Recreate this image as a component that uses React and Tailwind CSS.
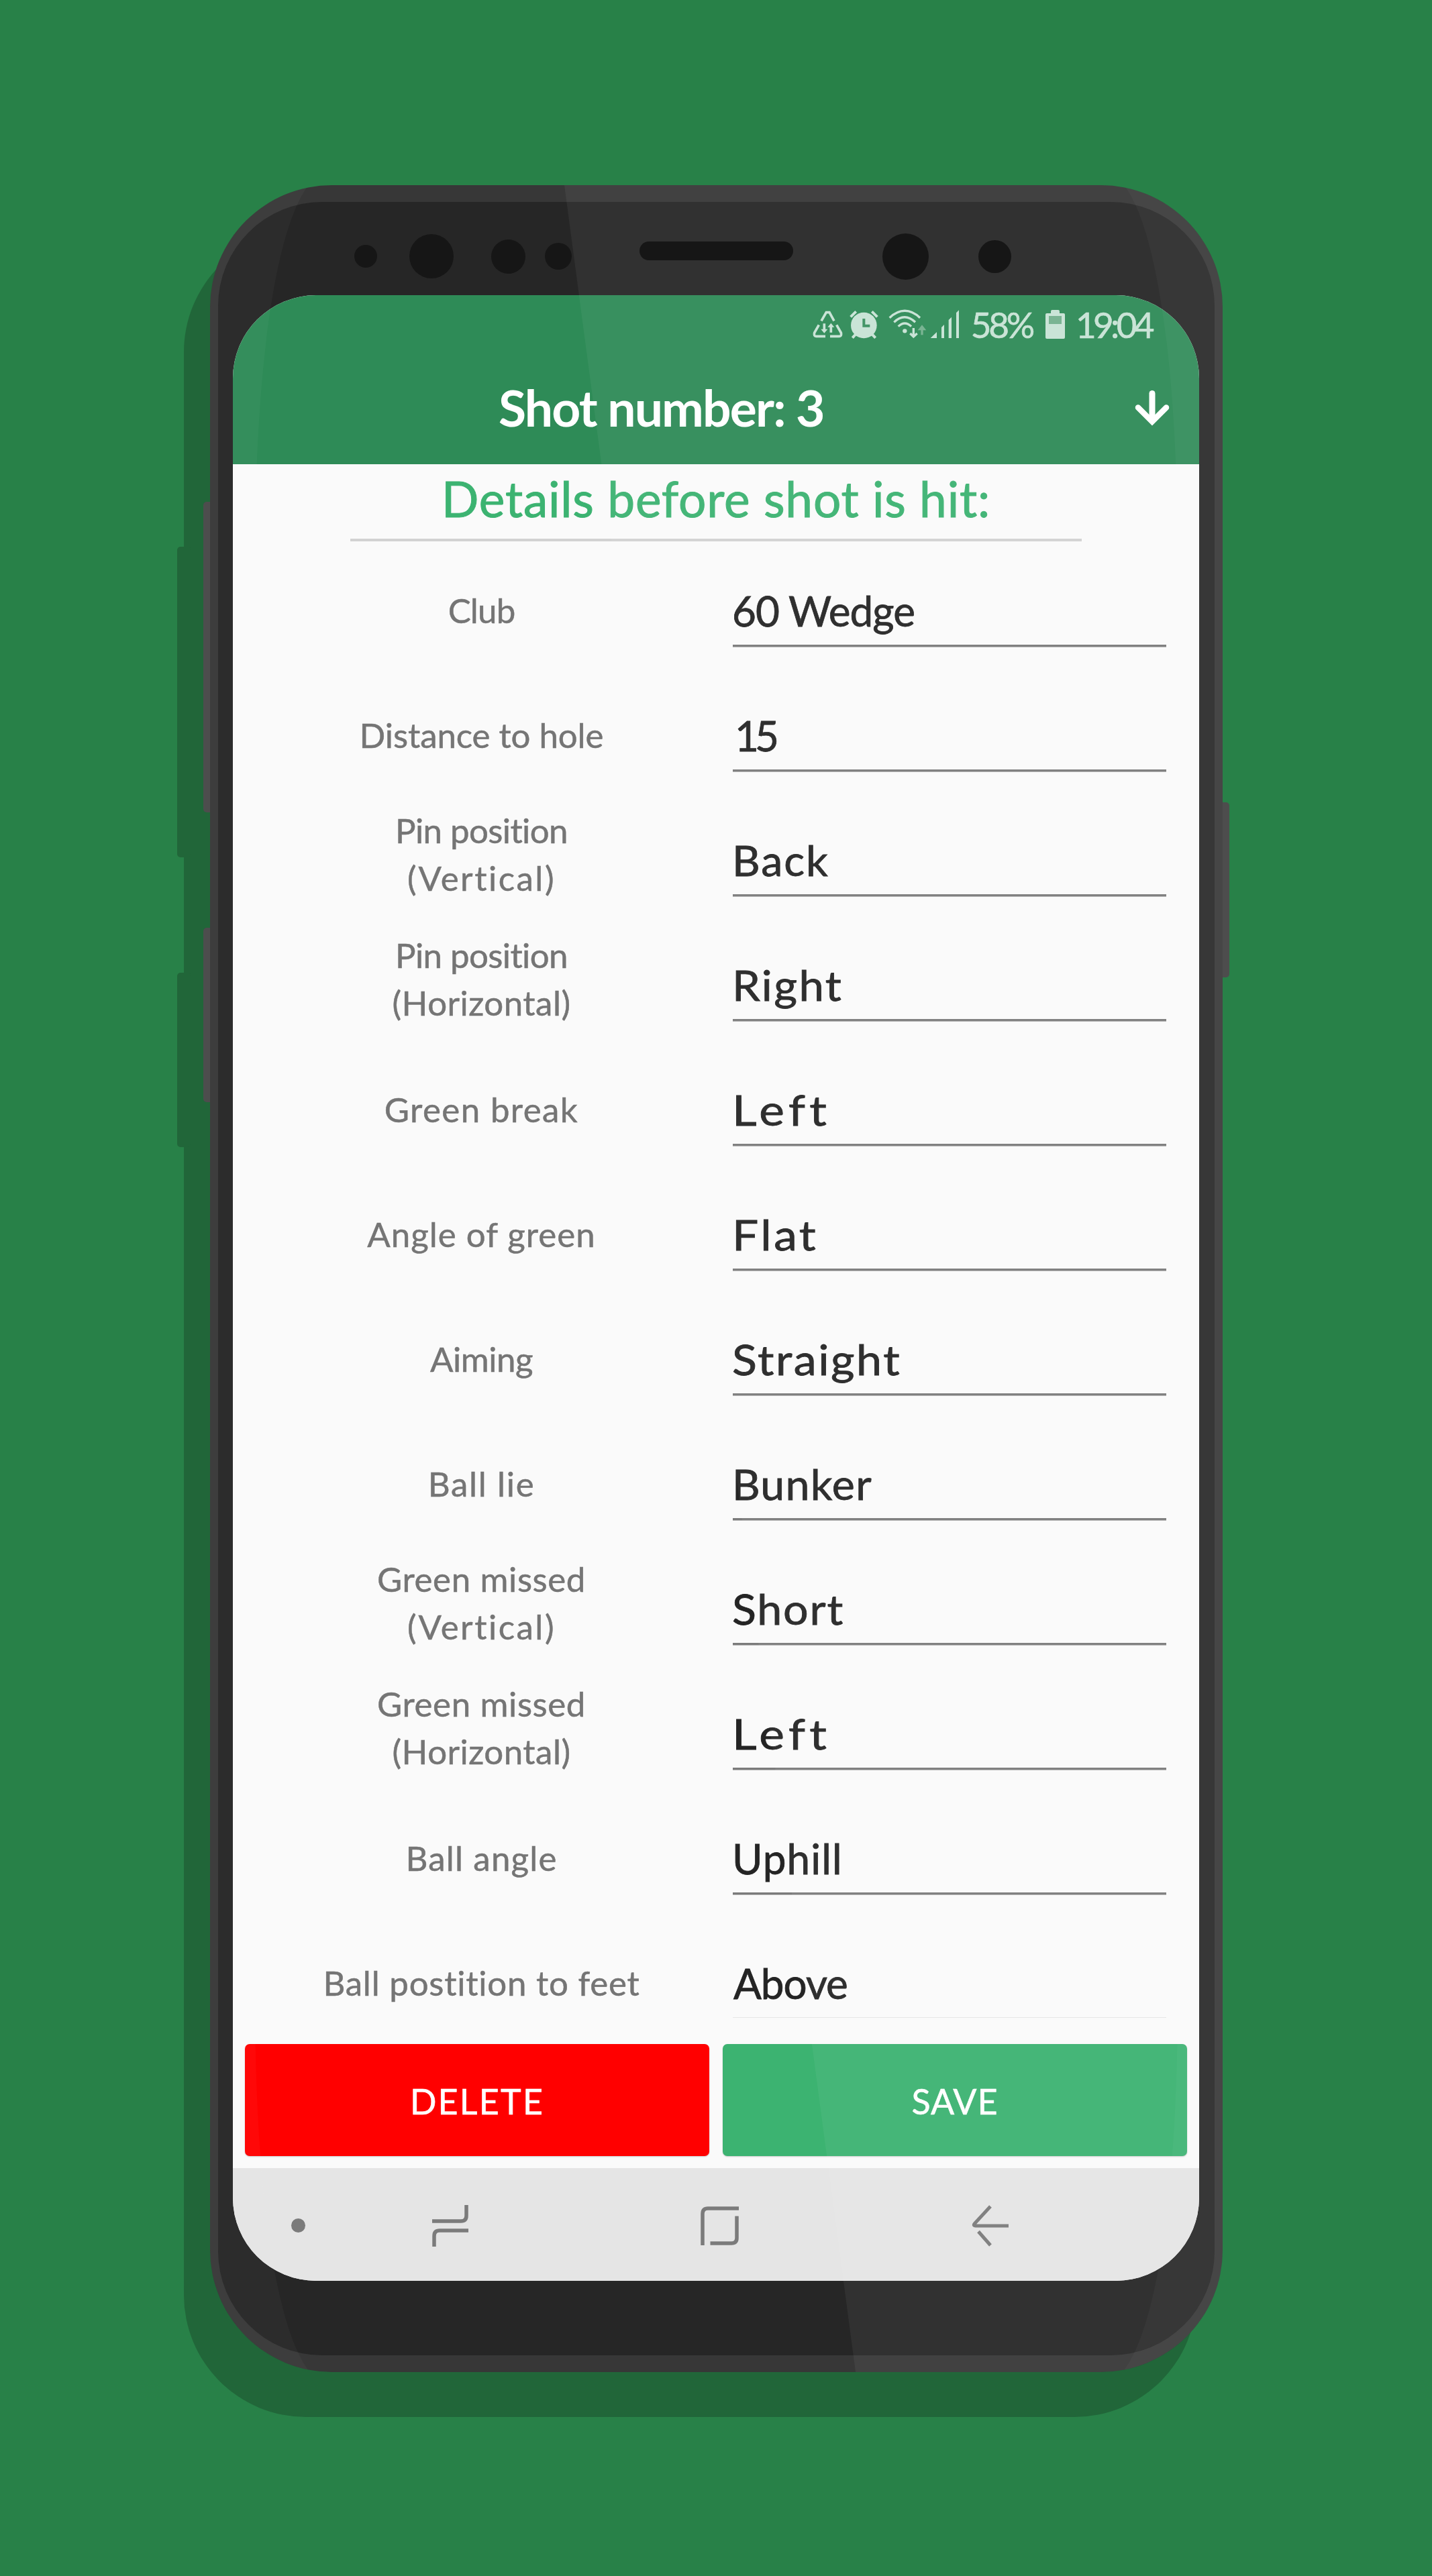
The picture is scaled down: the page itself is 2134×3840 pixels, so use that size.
const rows = [
  { label: ["Club"], labelCls: "tracking-[-0.85px]", value: "60 Wedge", valueCls: "tracking-[-0.96px]" },
  { label: ["Distance to hole"], labelCls: "tracking-[-0.07px]", value: "15", valueCls: "pl-[4px] tracking-[-5.9px]" },
  { label: ["Pin position", "(Vertical)"], labelCls: "tracking-[-0.58px]", subCls: "tracking-[2.5px]", value: "Back", valueCls: "origin-left scale-x-[1.04] tracking-[1.9px]" },
  { label: ["Pin position", "(Horizontal)"], labelCls: "tracking-[-0.58px]", subCls: "tracking-[0.48px]", value: "Right", valueCls: "origin-left scale-x-[1.08] tracking-[2.2px] -ml-[4px]" },
  { label: ["Green break"], labelCls: "tracking-[1.39px]", value: "Left", valueCls: "origin-left scale-x-[1.15] tracking-[5.5px]" },
  { label: ["Angle of green"], labelCls: "tracking-[1.03px]", value: "Flat", valueCls: "origin-left scale-x-[1.12] tracking-[3.2px] -ml-[3px]" },
  { label: ["Aiming"], labelCls: "tracking-[-0.46px]", value: "Straight", valueCls: "origin-left scale-x-[1.1] tracking-[2.3px]" },
  { label: ["Ball lie"], labelCls: "tracking-[1.67px]", value: "Bunker", valueCls: "origin-left scale-x-[1.04] tracking-[1.2px]" },
  { label: ["Green missed", "(Vertical)"], labelCls: "tracking-[0.63px]", subCls: "tracking-[2.5px]", value: "Short", valueCls: "origin-left scale-x-[1.07] tracking-[1.7px]" },
  { label: ["Green missed", "(Horizontal)"], labelCls: "tracking-[0.63px]", subCls: "tracking-[0.48px]", value: "Left", valueCls: "origin-left scale-x-[1.15] tracking-[5.5px]" },
  { label: ["Ball angle"], labelCls: "tracking-[1.18px]", value: "Uphill", valueCls: "tracking-[1.09px]" },
  { label: ["Ball postition to feet"], labelCls: "tracking-[0.77px]", value: "Above", valueCls: "pl-[2px] tracking-[-0.99px]" },
];

function StatusIcons() {
  return (
    <>
      <svg className="w-[45px] h-[44px]" viewBox="32 32 135 132" fill="none" stroke="currentColor" strokeWidth="11">
        <path d="M71 84 L93 46 H107 L128 84" />
        <path d="M60 102 L40 137 Q36 153 48 153 H89" />
        <path d="M139 102 L159 137 Q163 153 151 153 H110" />
        <path d="M84 96 V126 M114 136 V106" />
        <path d="M69 121 H99 L84 139 Z M99 112 H129 L114 94 Z" fill="currentColor" stroke="none" />
      </svg>
      <svg className="ml-[10px] w-[43px] h-[44px]" viewBox="197 32 129 132" fill="none" stroke="currentColor" strokeWidth="12">
        <path d="M202 66 L226 42 M297 42 L321 66 M210 160 L228 140 M313 160 L294 140" />
        <circle cx="261" cy="104" r="58" fill="currentColor" stroke="none" />
        <path d="M261 74 V106 H288" stroke="#3a9160" />
      </svg>
      <svg className="ml-[15px] w-[57px] h-[44px]" viewBox="371 32 171 132" fill="none" stroke="currentColor" strokeWidth="10">
        <path d="M376 70 Q444 8 512 70 M396 90 Q443 45 491 90 M415 109 Q444 81 473 109" />
        <circle cx="444" cy="129" r="9.5" fill="currentColor" stroke="none" />
        <path d="M483 116 V155 M468 140 L483 155 L499 140" />
        <path d="M521 147 V118" stroke="#73b08e" />
        <path d="M502 126 L521 102 L540 126 Z" fill="#73b08e" stroke="none" />
      </svg>
      <svg className="ml-[5px] w-[44px] h-[44px]" viewBox="558 32 132 132" fill="currentColor">
        <path d="M560 161 H588 V134 Z M609 161 V113 L621 101 V161 Z M641 161 V80 L654 67 V161 Z M675 161 V48 L687 36 V161 Z" />
      </svg>
    </>
  );
}

function StatusBar() {
  return (
    <div className="h-[88px] shrink-0 flex items-center justify-end pr-[71px] pb-[2px] text-[#c8e3d5] text-[53px] leading-none">
      <StatusIcons />
      <span className="ml-[17px] tracking-[-4.24px] [-webkit-text-stroke:0.6px_#c8e3d5]">58%</span>
      <svg className="ml-[20px] w-[29px] h-[43px]" viewBox="0 0 29 43">
        <path d="M8 5 V2 Q8 0 10 0 H19 Q21 0 21 2 V5 H27 Q29 5 29 7 V41 Q29 43 27 43 H2 Q0 43 0 41 V7 Q0 5 2 5 Z" fill="#c8e3d5" />
        <rect x="5" y="9" width="19" height="12" fill="#73b08e" />
      </svg>
      <span className="ml-[16px] tracking-[-4.62px] [-webkit-text-stroke:0.6px_#c8e3d5]">19:04</span>
    </div>
  );
}

function TitleBar() {
  return (
    <div className="h-[164px] shrink-0 flex items-center justify-between pl-[396px] pr-[44px] pb-[6px] text-white">
      <h1 className="text-[75px] leading-none font-bold tracking-[-1.84px] whitespace-nowrap">Shot number: 3</h1>
      <svg className="w-[52px] h-[53px] mt-[2px]" viewBox="0 0 52 53" fill="none" stroke="currentColor" strokeLinecap="round">
        <path d="M26 4.5 V44" strokeWidth="9" />
        <path d="M5 25.5 L26 46.5 L47 25.5" strokeWidth="8.5" />
      </svg>
    </div>
  );
}

function FormRow({ row }) {
  const double = row.label.length > 1;
  return (
    <div className="h-[186px] shrink-0 flex">
      <div
        className={
          "w-[738px] pl-[3px] flex flex-col items-center justify-center text-[51px] leading-[71.5px] text-[#757575] whitespace-nowrap [-webkit-text-stroke:0.5px_#757575] " +
          (double ? "pb-[40px]" : "pb-[22px]")
        }
      >
        <span className={row.labelCls}>{row.label[0]}</span>
        {double && <span className={row.subCls}>{row.label[1]}</span>}
      </div>
      <div className="ml-[7px] w-[646px] pt-[51px]">
        <div className={"-ml-px h-[62px] text-[62px] leading-none text-[#242424] whitespace-nowrap [-webkit-text-stroke:0.8px_#242424] " + row.valueCls}>
          {row.value}
        </div>
        <div className="mt-[20px] h-[4px] bg-[#7b7b7b] border-b border-[#b5b5b5]" />
      </div>
    </div>
  );
}

function NavBar() {
  return (
    <div className="h-[168px] shrink-0 bg-[#e5e5e5] flex items-center pl-[87px] pt-[3px] text-[#7b7b7b]">
      <span className="size-[21px] rounded-full bg-[#7b7b7b]" />
      <svg className="ml-[189px] w-[54px] h-[62px]" viewBox="0 0 54 62" fill="none" stroke="currentColor" strokeWidth="5.5">
        <path d="M0 24 H43 Q51 24 51 16 V0 M3 62 V46 Q3 38 11 38 H54" />
      </svg>
      <svg className="ml-[346px] w-[57px] h-[60px]" viewBox="0 0 57 60" fill="none" stroke="currentColor" strokeWidth="5.5">
        <path d="M3 59 V12 Q3 4 11 4 H57 M54 15.5 V48 Q54 56 46 56 H14.5" />
      </svg>
      <svg className="ml-[347px] w-[56px] h-[62px]" viewBox="0 0 56 62" fill="none" stroke="currentColor" strokeWidth="5">
        <path d="M28 2 L4.5 27.5 Q1.5 31 6 31 H55 M10 39.5 L28 60" />
      </svg>
    </div>
  );
}

function Screen() {
  return (
    <div className="ml-[22px] w-[1440px] h-[2960px] rounded-[124px] overflow-hidden bg-[#fafafa] flex flex-col">
      <div className="bg-[#2e8b57] flex flex-col">
        <StatusBar />
        <TitleBar />
      </div>
      <div className="h-[111px] shrink-0 flex items-center justify-center pb-[9px]">
        <h2 className="text-[73px] leading-none tracking-[0.8px] text-[#3cb371] whitespace-nowrap [-webkit-text-stroke:1px_#3cb371]">
          Details before shot is hit:
        </h2>
      </div>
      <div className="h-[4px] shrink-0 w-[1090px] self-center bg-[#d2d2d2]" />
      <div className="mt-[21px] h-[2179px] shrink-0 overflow-hidden flex flex-col">
        {rows.map((row, i) => (
          <FormRow key={i} row={row} />
        ))}
      </div>
      <div className="ml-[745px] w-[646px] h-px shrink-0 bg-[#e6e6e6]" />
      <div className="mt-[39px] h-[185px] shrink-0 px-[18px] pb-[18px] flex gap-5 text-[52px] text-white">
        <button className="flex-1 rounded-[7px] bg-[#ff0000] pt-[3px] tracking-[2.2px] shadow-[0_1px_2px_rgba(0,0,0,0.2)] [-webkit-text-stroke:0.6px_white]">DELETE</button>
        <button className="flex-1 rounded-[7px] bg-[#3cb371] pt-[3px] tracking-[0.96px] shadow-[0_1px_2px_rgba(0,0,0,0.2)] [-webkit-text-stroke:0.6px_white]">SAVE</button>
      </div>
      <NavBar />
    </div>
  );
}

function Sensors() {
  return (
    <div className="h-[139px] flex items-center pt-[23px]">
      <span className="relative z-20 ml-[203px] size-[34px] rounded-full bg-[#161616]" />
      <span className="relative z-20 ml-[48px] size-[66px] rounded-full bg-[#161616]" />
      <span className="relative z-20 ml-[56px] size-[51px] rounded-full bg-[#161616]" />
      <span className="relative z-20 ml-[29px] size-[40px] rounded-full bg-[#161616]" />
      <span className="relative z-20 ml-[101px] mb-[17px] w-[229px] h-[28px] rounded-full bg-[#161616]" />
      <span className="relative z-20 ml-[133px] size-[69px] rounded-full bg-[#161616]" />
      <span className="relative z-20 ml-[74px] size-[49px] rounded-full bg-[#161616]" />
    </div>
  );
}

function Glare() {
  return (
    <svg className="absolute inset-0 z-10 w-[1509px] h-[3260px] pointer-events-none" viewBox="0 0 1509 3260">
      <path d="M528 0 H1509 V3260 H962 Z" fill="#fff" fillOpacity="0.05" />
      <path d="M0 0 H147 C100 60 67 260 67 560 V2700 C67 3000 100 3200 149 3260 H0 Z" fill="#fff" fillOpacity="0.03" />
      <path d="M1509 0 H1362 C1409 60 1442 260 1442 560 V2700 C1442 3000 1409 3200 1360 3260 H1509 Z" fill="#fff" fillOpacity="0.03" />
    </svg>
  );
}

export default function App() {
  return (
    <div className="w-[2134px] h-[3840px] overflow-hidden bg-[#288148] pt-[276px] pl-[313px] font-[Lato,'Open_Sans',sans-serif]">
      <div className="relative w-[1509px] h-[3260px]">
        <div className="absolute -left-[39px] top-[67px] w-[1509px] h-[3260px] rounded-[182px] bg-[#216639]" />
        <div className="absolute -left-[49px] top-[539px] w-[20px] h-[463px] rounded-[5px] bg-[#216639]" />
        <div className="absolute -left-[49px] top-[1174px] w-[20px] h-[260px] rounded-[5px] bg-[#216639]" />
        <div className="absolute -left-[10px] top-[472px] w-[20px] h-[463px] rounded-[5px] bg-[#4d4d4d]" />
        <div className="absolute -left-[10px] top-[1107px] w-[20px] h-[260px] rounded-[5px] bg-[#4d4d4d]" />
        <div className="absolute -right-[10px] top-[920px] w-[20px] h-[261px] rounded-[5px] bg-[#4d4d4d]" />
        <div className="relative w-[1509px] h-[3260px] rounded-[182px] overflow-hidden bg-[#373737] pt-[25px] px-[12px]">
          <div className="h-[3210px] rounded-[155px] bg-[#262626]">
            <Sensors />
            <Screen />
          </div>
          <Glare />
        </div>
      </div>
    </div>
  );
}
